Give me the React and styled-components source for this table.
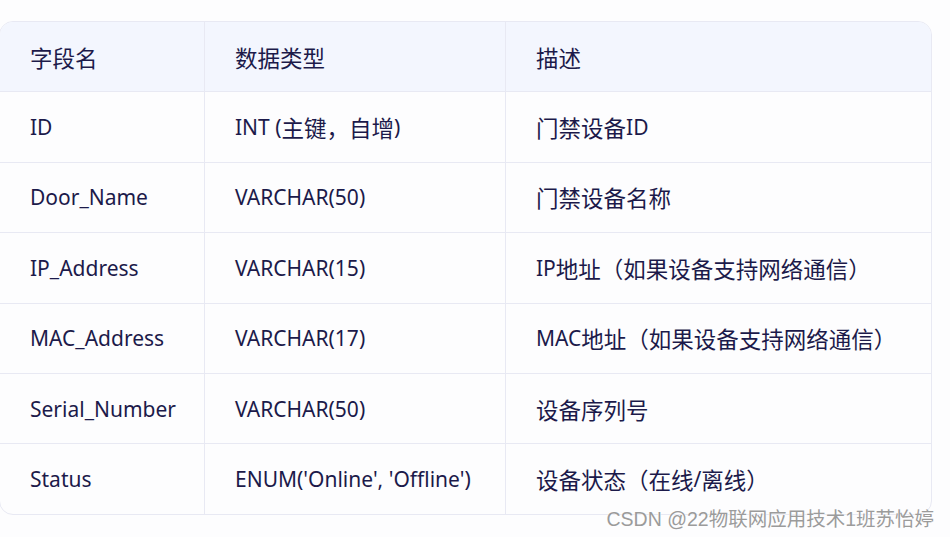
import styled, { createGlobalStyle } from "styled-components";

const rows = [
  ["ID", "INT (主键，自增)", "门禁设备ID"],
  ["Door_Name", "VARCHAR(50)", "门禁设备名称"],
  ["IP_Address", "VARCHAR(15)", "IP地址（如果设备支持网络通信）"],
  ["MAC_Address", "VARCHAR(17)", "MAC地址（如果设备支持网络通信）"],
  ["Serial_Number", "VARCHAR(50)", "设备序列号"],
  ["Status", "ENUM('Online', 'Offline')", "设备状态（在线/离线）"],
];

// Chinese glyphs in the source render a touch larger than the Latin ones
function Mixed({ text }) {
  return text
    .split(/([\u3000-\u9fff\uff00-\uffef]+)/)
    .filter(Boolean)
    .map((part, i) =>
      /[\u3000-\u9fff\uff00-\uffef]/.test(part) ? (
        <Han key={i}>{part}</Han>
      ) : (
        <span key={i}>{part}</span>
      )
    );
}

export default function App() {
  return (
    <>
      <GlobalStyle />
      <Page>
        <Table>
          <Row header>
            <Cell><Mixed text="字段名" /></Cell>
            <Cell><Mixed text="数据类型" /></Cell>
            <Cell last><Mixed text="描述" /></Cell>
          </Row>
          {rows.map((r, i) => (
            <Row key={r[0]} end={i === rows.length - 1}>
              <Cell><Mixed text={r[0]} /></Cell>
              <Cell><Mixed text={r[1]} /></Cell>
              <Cell last><Mixed text={r[2]} /></Cell>
            </Row>
          ))}
        </Table>
        <Watermark>CSDN @22物联网应用技术1班苏怡婷</Watermark>
      </Page>
    </>
  );
}

const GlobalStyle = createGlobalStyle`
  html, body {
    margin: 0;
    background: #fdfdfe;
  }
`;

const Page = styled.div`
  position: relative;
  width: 950px;
  height: 537px;
  overflow: hidden;
  padding-top: 21px;
  box-sizing: border-box;
`;

const Table = styled.div`
  margin-left: -1px;
  width: 931px;
  border: 1px solid #e8e9f3;
  border-radius: 14px;
  overflow: hidden;
  background: #fdfdfe;
  font-family: "Noto Sans", "Noto Sans CJK SC", sans-serif;
  font-size: 21px;
  color: #1c1a4a;
`;

const Row = styled.div`
  display: grid;
  grid-template-columns: 205px 301px 1fr;
  height: 69.4px;
  border-bottom: ${(p) => (p.end ? "none" : "1px solid #e8e9f3")};
  background: ${(p) => (p.header ? "#f3f6fe" : "transparent")};
`;

const Cell = styled.div`
  display: flex;
  align-items: center;
  padding: 0 30px;
  border-right: ${(p) => (p.last ? "none" : "1px solid #e8e9f3")};
  white-space: pre;
`;

const Han = styled.span`
  font-family: "Noto Sans CJK SC", sans-serif;
  font-size: 22.5px;
`;

const Watermark = styled.div`
  position: absolute;
  right: 16px;
  bottom: 5px;
  font-family: "Liberation Sans", "Noto Sans CJK SC", sans-serif;
  font-size: 19.5px;
  color: #9b9b9b;
  text-shadow: 0 0 2px #fff, 0 0 1px #fff;
`;
